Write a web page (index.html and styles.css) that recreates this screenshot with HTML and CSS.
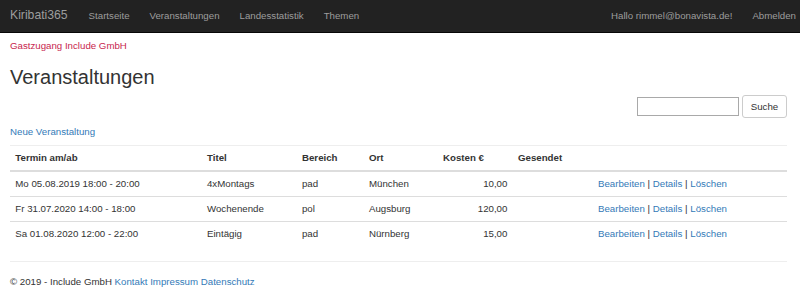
FILE: index.html
```html
<!DOCTYPE html>
<html lang="de">
<head>
  <meta charset="UTF-8" />
  <meta name="viewport" content="width=device-width, initial-scale=1.0" />
  <title>Veranstaltungen - Kiribati365</title>
  <link rel="stylesheet" href="styles.css">
</head>
<body>
  <nav class="navbar">
    <a class="brand" href="#">Kiribati365</a>
    <ul class="nav">
      <li><a href="#">Startseite</a></li>
      <li><a href="#">Veranstaltungen</a></li>
      <li><a href="#">Landesstatistik</a></li>
      <li><a href="#">Themen</a></li>
    </ul>
    <ul class="nav nav-right">
      <li><a href="#">Hallo rimmel@bonavista.de!</a></li>
      <li><a href="#">Abmelden</a></li>
    </ul>
  </nav>

  <div class="content">
    <p class="guest">Gastzugang Include GmbH</p>
    <h2>Veranstaltungen</h2>

    <form class="search">
      <input type="text" class="search-input" />
      <button type="button" class="btn">Suche</button>
    </form>

    <p class="new-link"><a href="#">Neue Veranstaltung</a></p>

    <table class="table">
      <colgroup>
        <col class="c-termin">
        <col class="c-titel">
        <col class="c-bereich">
        <col class="c-ort">
        <col class="c-kosten">
        <col class="c-gesendet">
        <col>
      </colgroup>
      <thead>
        <tr>
          <th>Termin am/ab</th>
          <th>Titel</th>
          <th>Bereich</th>
          <th>Ort</th>
          <th>Kosten €</th>
          <th>Gesendet</th>
          <th></th>
        </tr>
      </thead>
      <tbody>
        <tr>
          <td>Mo 05.08.2019 18:00 - 20:00</td>
          <td>4xMontags</td>
          <td>pad</td>
          <td>München</td>
          <td class="num">10,00</td>
          <td></td>
          <td><a href="#">Bearbeiten</a> | <a href="#">Details</a> | <a href="#">Löschen</a></td>
        </tr>
        <tr>
          <td>Fr 31.07.2020 14:00 - 18:00</td>
          <td>Wochenende</td>
          <td>pol</td>
          <td>Augsburg</td>
          <td class="num">120,00</td>
          <td></td>
          <td><a href="#">Bearbeiten</a> | <a href="#">Details</a> | <a href="#">Löschen</a></td>
        </tr>
        <tr>
          <td>Sa 01.08.2020 12:00 - 22:00</td>
          <td>Eintägig</td>
          <td>pad</td>
          <td>Nürnberg</td>
          <td class="num">15,00</td>
          <td></td>
          <td><a href="#">Bearbeiten</a> | <a href="#">Details</a> | <a href="#">Löschen</a></td>
        </tr>
      </tbody>
    </table>

    <hr />
    <footer>
      <p>© 2019 - Include GmbH <a href="#">Kontakt</a> <a href="#">Impressum</a> <a href="#">Datenschutz</a></p>
    </footer>
  </div>
</body>
</html>
```

FILE: styles.css
```css
body {
  margin: 0;
  font-family: "Liberation Sans", Arial, sans-serif;
  font-size: 9.7px;
  line-height: 13.4px;
  color: #333;
  background: #fff;
}
a {
  color: #337ab7;
  text-decoration: none;
}
.navbar {
  display: flex;
  align-items: center;
  height: 32px;
  background: #222;
  border-bottom: 1px solid #080808;
  padding: 0 4px 0 0;
}
.brand {
  color: #9d9d9d;
  font-size: 12.2px;
  padding: 0 11px 0 10px;
}
.nav {
  display: flex;
  list-style: none;
  margin: 0;
  padding: 0;
}
.nav a {
  display: block;
  color: #9d9d9d;
  padding: 0 10px;
}
.nav-right {
  margin-left: auto;
}
.nav-right li:last-child a {
  padding-right: 0;
}
.content {
  padding: 0 13px 0 10px;
}
.guest {
  color: #c7254e;
  margin: 6px 0 0;
}
h2 {
  font-size: 20px;
  font-weight: normal;
  line-height: 22px;
  margin: 14px 0 0;
}
.search {
  display: flex;
  justify-content: flex-end;
  align-items: center;
  gap: 3px;
  margin-top: 7px;
  height: 23px;
}
.search-input {
  box-sizing: border-box;
  width: 102px;
  height: 19px;
  border: 1px solid #a9a9a9;
  margin: 0;
  padding: 1px 2px;
}
.btn {
  box-sizing: border-box;
  width: 45px;
  height: 23px;
  background: #fff;
  border: 1px solid #ccc;
  border-radius: 3px;
  font-family: inherit;
  font-size: 9.7px;
  color: #333;
  padding: 0;
}
.new-link {
  margin: 7px 0 0;
}
.table {
  width: 100%;
  margin: 6px 0 15px;
  border-collapse: collapse;
  table-layout: fixed;
}
.c-termin { width: 191.7px; }
.c-titel { width: 95px; }
.c-bereich { width: 67px; }
.c-ort { width: 74px; }
.c-kosten { width: 75px; }
.c-gesendet { width: 80px; }
.table th,
.table td {
  padding: 5.3px;
  text-align: left;
  vertical-align: top;
  border-top: 1px solid #ddd;
}
.table thead th {
  border-bottom: 2px solid #ddd;
}
.table thead tr:first-child th {
  border-top: 1px solid #eee;
}
.table td.num {
  text-align: right;
}
hr {
  border: 0;
  border-top: 1px solid #eee;
  margin: 0;
}
footer p {
  margin: 13.3px 0 0;
}
```
